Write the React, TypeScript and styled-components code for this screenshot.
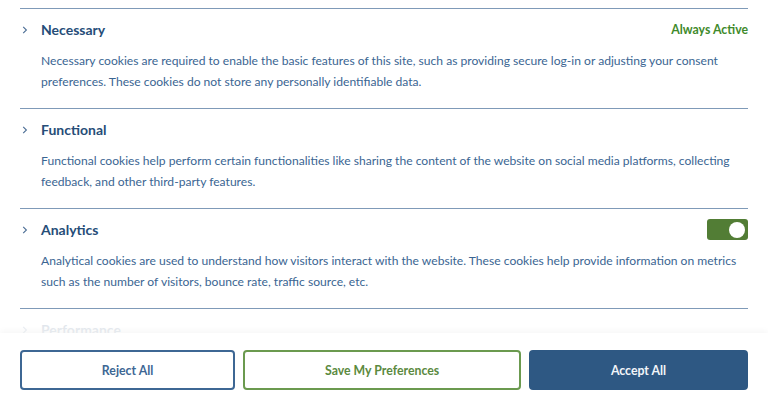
import React from "react";
import styled, { createGlobalStyle } from "styled-components";

const GlobalStyle = createGlobalStyle`
  html, body {
    margin: 0;
    padding: 0;
    background: #ffffff;
  }
  body {
    font-family: Lato, "Noto Sans", "Liberation Sans", sans-serif;
    -webkit-font-smoothing: antialiased;
  }
`;

const sections = [
  {
    title: "Necessary",
    text: "Necessary cookies are required to enable the basic features of this site, such as providing secure log-in or adjusting your consent preferences. These cookies do not store any personally identifiable data.",
    control: "always",
  },
  {
    title: "Functional",
    text: "Functional cookies help perform certain functionalities like sharing the content of the website on social media platforms, collecting feedback, and other third-party features.",
    control: "none",
  },
  {
    title: "Analytics",
    text: "Analytical cookies are used to understand how visitors interact with the website. These cookies help provide information on metrics such as the number of visitors, bounce rate, traffic source, etc.",
    control: "toggle",
  },
  {
    title: "Performance",
    text: "Performance cookies are used to understand and analyse the key performance indexes of the website which helps in delivering a better user experience for the visitors.",
    control: "none",
  },
];

const App: React.FC = () => {
  return (
    <>
      <GlobalStyle />
      <Panel>
        <List>
          {sections.map((s) => (
            <Section key={s.title}>
              <Header>
                <Chevron viewBox="0 0 8 10">
                  <path d="M2.2 1.8 L5.4 5 L2.2 8.2" />
                </Chevron>
                <Title>{s.title}</Title>
                {s.control === "always" && <AlwaysActive>Always Active</AlwaysActive>}
                {s.control === "toggle" && (
                  <Toggle>
                    <Knob />
                  </Toggle>
                )}
              </Header>
              <Description>{s.text}</Description>
            </Section>
          ))}
          <Fade />
        </List>
        <Footer>
          <Button $variant="outline">Reject All</Button>
          <Button $variant="green">Save My Preferences</Button>
          <Button $variant="solid">Accept All</Button>
        </Footer>
      </Panel>
    </>
  );
};

const Panel = styled.div`
  width: 768px;
  height: 399px;
  display: flex;
  flex-direction: column;
  overflow: hidden;
  background: #fff;
`;

const List = styled.div`
  position: relative;
  height: 333px;
  flex-shrink: 0;
  overflow: hidden;
  padding: 8px 20px 0;
  box-sizing: border-box;
`;

const Section = styled.div`
  border-top: 1.5px solid #7f9ab8;
  padding: 10.5px 0 15.5px;
`;

const Header = styled.div`
  height: 20px;
  display: flex;
  align-items: center;
`;

const Chevron = styled.svg`
  width: 8px;
  height: 10px;
  margin-left: 1px;
  margin-right: 12px;
  fill: none;
  stroke: #4a6d94;
  stroke-width: 1.1;
`;

const Title = styled.div`
  flex: 1;
  font-size: 14px;
  font-weight: 700;
  color: #264d78;
`;

const AlwaysActive = styled.div`
  font-size: 12.3px;
  font-weight: 700;
  color: #3f8a2c;
`;

const Toggle = styled.div`
  width: 41px;
  height: 21px;
  border-radius: 3px;
  background: #527d35;
  display: flex;
  align-items: center;
  justify-content: flex-end;
  padding-right: 3px;
  box-sizing: border-box;
`;

const Knob = styled.div`
  width: 16px;
  height: 16px;
  border-radius: 50%;
  background: #fff;
`;

const Description = styled.p`
  margin: 10px 0 0;
  padding-left: 21px;
  font-size: 12.1px;
  line-height: 21.5px;
  color: #3a6592;
`;

const Fade = styled.div`
  position: absolute;
  left: 0;
  right: 0;
  bottom: 0;
  height: 20px;
  background: linear-gradient(to bottom, rgba(255, 255, 255, 0.75), rgba(255, 255, 255, 0.92));
`;

const Footer = styled.div`
  flex: 1;
  display: flex;
  align-items: flex-start;
  gap: 8px;
  padding: 17px 20px 0 20px;
  background: #fff;
  box-shadow: 0 -2px 6px rgba(0, 0, 0, 0.04);
  position: relative;
`;

const Button = styled.button<{ $variant: "outline" | "green" | "solid" }>`
  flex: 1 1 auto;
  height: 40px;
  padding: 0 16px;
  display: flex;
  align-items: center;
  justify-content: center;
  border-radius: 4px;
  font-family: inherit;
  font-size: 12.3px;
  font-weight: 700;
  cursor: pointer;
  border: 2px solid
    ${(p) => (p.$variant === "green" ? "#6b9a4f" : p.$variant === "solid" ? "#2e5883" : "#3d6794")};
  background: ${(p) => (p.$variant === "solid" ? "#2e5883" : "#fff")};
  color: ${(p) => (p.$variant === "green" ? "#5b8a40" : p.$variant === "solid" ? "#f2f5f9" : "#3d6794")};
`;

export default App;
